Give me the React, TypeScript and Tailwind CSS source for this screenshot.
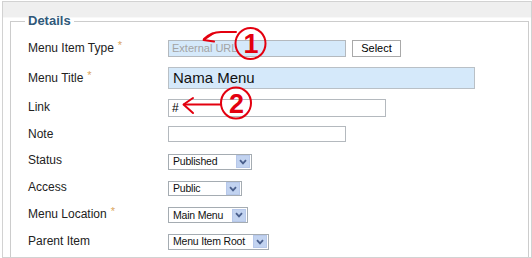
import { ReactNode } from "react";

const font = "font-['Liberation_Sans',Arial,sans-serif]";

interface RowProps {
	label: string;
	required?: boolean;
	height: string;
	children: ReactNode;
}

const Row = ({ label, required, height, children }: RowProps) => {
	return (
		<div className={`flex items-center ${height}`}>
			<div className="flex w-[140px] items-center text-[12px] text-[#222]">
				<span>{label}</span>
				{required && <span className="ml-[4px] -mt-[6px] text-[11px] text-[#dba55c]">*</span>}
			</div>
			{children}
		</div>
	);
};

interface SelectProps {
	value: string;
	className: string;
}

const Select = ({ value, className }: SelectProps) => {
	return (
		<div className={`flex items-center justify-between border border-[#a5acb2] bg-white pl-[4px] pr-[1px] ${className}`}>
			<span className="whitespace-nowrap text-[10.5px] leading-none tracking-[-0.2px] text-[#111]">{value}</span>
			<span className="flex h-[13px] w-[14px] shrink-0 items-center justify-center border border-[#b7c8ea] bg-[#c2d3f0]">
				<svg width="8" height="6" viewBox="0 0 8 6">
					<path d="M1 1.2 L4 4.4 L7 1.2" stroke="#4a5f8c" strokeWidth="1.8" fill="none" />
				</svg>
			</span>
		</div>
	);
};

const App = () => {
	return (
		<div className={`relative h-[258px] w-[532px] overflow-hidden bg-white pl-[2px] pt-[1px] ${font}`}>
			<div className="flex h-[257px] w-[530px] flex-col overflow-hidden border border-[#d2d2d2] bg-white">
				<div className="h-[16px] shrink-0 border-b border-[#f8f8f8] bg-[#efefef]" />
				<fieldset className="-mt-[5px] ml-[7px] h-[300px] w-[519px] shrink-0 border border-[#cccccc] bg-white pl-[17px] pt-[5px]">
					<legend className="-ml-[3px] px-[3px] text-[13px] font-bold leading-[16px] text-[#30597a]">Details</legend>

					<Row label="Menu Item Type" required height="h-[28px]">
						<div className="flex h-[17px] w-[178px] items-center border border-[#b4b9be] bg-[#d5e9fa] pl-[3px] text-[11px] text-[#a3a3a3]">
							External URL
						</div>
						<button className="ml-[6px] flex h-[17px] w-[49px] items-center justify-center border border-[#a9a9a9] bg-white text-[11px] text-black">
							Select
						</button>
					</Row>

					<Row label="Menu Title" required height="h-[32px]">
						<div className="flex h-[22px] w-[307px] items-center border border-[#b9c0c6] bg-[#d5e9fa] pl-[4px] text-[15px] text-[#111]">
							Nama Menu
						</div>
					</Row>

					<Row label="Link" height="h-[26px]">
						<div className="mt-[1px] flex h-[18px] w-[218px] items-center border border-[#b4b9be] bg-white pl-[3px] text-[12px] text-black">
							#
						</div>
					</Row>

					<Row label="Note" height="h-[27px]">
						<div className="h-[16px] w-[178px] border border-[#b4b9be] bg-white" />
					</Row>

					<Row label="Status" height="h-[26px]">
						<Select value="Published" className="mt-[3px] h-[16px] w-[84px]" />
					</Row>

					<Row label="Access" height="h-[27px]">
						<Select value="Public" className="mt-[4px] h-[15px] w-[74px]" />
					</Row>

					<Row label="Menu Location" required height="h-[28px]">
						<Select value="Main Menu" className="mt-[2px] h-[16px] w-[80px]" />
					</Row>

					<Row label="Parent Item" height="h-[26px]">
						<Select value="Menu Item Root" className="mt-[1px] h-[16px] w-[101px]" />
					</Row>
				</fieldset>
			</div>

			{/* red annotations drawn over the form */}
			<svg className="pointer-events-none absolute left-0 top-0" width="532" height="258" viewBox="0 0 532 258">
				<g stroke="#e3000f" strokeWidth="2" fill="none" strokeLinecap="round" strokeLinejoin="round">
					<ellipse cx="250.5" cy="43.5" rx="15" ry="15.5" />
					<path d="M236 32 L221 32 Q211 32 204 39" />
					<path d="M213 33.5 L203.5 40 L214 41.5" />
					<ellipse cx="236" cy="103" rx="15" ry="15.5" />
					<path d="M221 104.5 L184 104.5" />
					<path d="M193 98 L183.5 104.5 L193 113" />
				</g>
				<text x="251" y="53" textAnchor="middle" fontFamily="Liberation Sans, Arial, sans-serif" fontWeight="bold" fontSize="27" fill="#e3000f">1</text>
				<text x="236.5" y="113" textAnchor="middle" fontFamily="Liberation Sans, Arial, sans-serif" fontWeight="bold" fontSize="27" fill="#e3000f">2</text>
			</svg>
		</div>
	);
};

export default App;
